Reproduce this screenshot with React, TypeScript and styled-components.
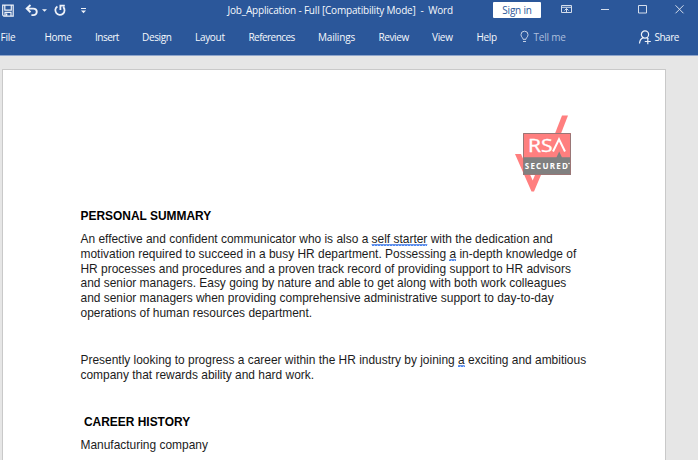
import React from 'react';
import styled, { createGlobalStyle } from 'styled-components';

const GlobalStyle = createGlobalStyle`
  * { box-sizing: border-box; }
  body { margin: 0; overflow: hidden; background: #e6e6e6; }
`;

const Window = styled.div`
  display: flex;
  flex-direction: column;
  width: 698px;
  height: 460px;
  overflow: hidden;
  background: #e6e6e6;
`;

const Chrome = styled.header`
  height: 56px;
  flex: none;
  background: #2b579a;
  border-bottom: 1px solid #8fa5cb;
  color: #f6f9fd;
  font: 10px/14px 'Open Sans', 'Noto Sans', sans-serif;
`;

const TitleBar = styled.div`
  display: flex;
  height: 21px;
`;

const QuickAccess = styled.div`
  width: 227.5px;
  flex: none;
`;

const Title = styled.div`
  width: 265.5px;
  padding-top: 3px;
  flex: none;
  white-space: pre;
  letter-spacing: -0.19px;
`;

const SignIn = styled.button`
  width: 48px;
  height: 16px;
  margin-top: 2px;
  padding: 0;
  flex: none;
  border: 0;
  border-radius: 1px;
  background: #fff;
  color: #2b579a;
  font: 10px/15px 'Open Sans', 'Noto Sans', sans-serif;
  letter-spacing: -0.2px;
`;

const WindowControls = styled.div`
  width: 157px;
  flex: none;
`;

const Tabs = styled.nav`
  display: flex;
  height: 34px;
  padding: 9px 0 0 0.5px;
`;

const Tab = styled.span<{ $width: number; $tracking: number; $after?: number; $muted?: boolean }>`
  flex: none;
  width: ${(p) => p.$width}px;
  margin-right: ${(p) => p.$after ?? 23.5}px;
  letter-spacing: ${(p) => p.$tracking}px;
  white-space: nowrap;
  color: ${(p) => (p.$muted ? '#adbfdd' : '#f6f9fd')};
`;

const TabIcon = styled.svg`
  flex: none;
  display: block;
`;

const Page = styled.main`
  width: 664px;
  flex: 1;
  margin: 13px 0 0 2px;
  padding: 45px 0 0 77.5px;
  border: solid #c9c9c9;
  border-width: 1px 1px 0 1px;
  background: #fff;
  color: #1c1c1c;
  font: 11.95px/14.75px 'Liberation Sans', Arial, sans-serif;
`;

const Logo = styled.svg`
  display: block;
  margin: 0 0 0 434.5px;
`;

const Heading = styled.h2<{ $top: number; $indent?: number }>`
  margin: ${(p) => p.$top}px 0 0 ${(p) => p.$indent ?? 0}px;
  font-size: inherit;
  line-height: 15px;
  color: #000;
`;

const Paragraph = styled.p<{ $top: number }>`
  margin: ${(p) => p.$top}px 0 0;
  white-space: nowrap;
`;

const Grammar = styled.span`
  background: repeating-linear-gradient(90deg, #4a86f2 0 2px, #a9c6fa 2px 3px) 0 100% / 100% 1px no-repeat;
  text-decoration: underline;
  text-decoration-color: #6a94e6;
  text-decoration-thickness: 1px;
  text-decoration-skip-ink: none;
  text-underline-offset: 1px;
`;

const tabs: [string, number, number, number?][] = [
  ['File', 15, -0.2, 29],
  ['Home', 27, -0.3],
  ['Insert', 23.7, -0.52, 23.3],
  ['Design', 29.5, -0.36],
  ['Layout', 29.7, -0.3, 23.8],
  ['References', 46, -0.55],
  ['Mailings', 37, -0.18],
  ['Review', 30, -0.4],
  ['View', 20.5, -0.3, 24],
  ['Help', 20.5, -0.3, 22],
];

export default function App() {
  return (
    <>
      <GlobalStyle />
      <Window>
        <Chrome>
          <TitleBar>
            <QuickAccess>
              <svg width="100" height="21" fill="none" stroke="#eef2f9">
                <path d="M2.7 5.2h10.5v10.9H3.8l-1.1-1z M4.8 5.5v4.6h6.5V5.5 M5 16v-3.6h6V16" strokeWidth="1.2" />
                <path d="M6.6 13.5v2.3" strokeWidth="1.4" />
                <path d="M27 8.6h6.2c4.6 0 4.9 6.5 0 6.5h-1.8 M30.5 5l-3.8 3.6 3.8 3.6" strokeWidth="1.9" />
                <path d="M42 9.2h5l-2.5 2.6z" fill="#eef2f9" stroke="none" />
                <path d="M57.4 6.4A4.6 4.6 0 1 0 63.2 7 M60.4 10V5.7h4.4" strokeWidth="1.8" />
                <path d="M81 8.5h5" />
                <path d="M81 10.5h5l-2.5 2.7z" fill="#eef2f9" stroke="none" />
              </svg>
            </QuickAccess>
            <Title>{'Job_Application - Full [Compatibility Mode]  -  Word'}</Title>
            <SignIn>Sign in</SignIn>
            <WindowControls>
              <svg width="157" height="21" fill="none" stroke="#d5deec">
                <path d="M20.5 5.5h10v7h-10z M20.5 7.3h10 M25.5 12V8.5 M23.5 10.5l2-2 2 2" />
                <path d="M60 9.5h8" />
                <path d="M97.5 5.5h8v7.5h-8z" />
                <path d="M134.5 5.3l8 8 M142.5 5.3l-8 8" />
              </svg>
            </WindowControls>
          </TitleBar>
          <Tabs>
            {tabs.map(([name, width, tracking, after]) => (
              <Tab key={name} $width={width} $tracking={tracking} $after={after}>{name}</Tab>
            ))}
            <TabIcon width="14.5" height="15" fill="none" stroke="#c6d2e6" strokeWidth="1">
              <path d="M4 9.3c0-1.8-2-2.2-2-4.6a3.5 3.5 0 0 1 7 0c0 2.4-2 2.8-2 4.6z M4 11.5h3" />
            </TabIcon>
            <Tab $width={32} $tracking={-0.2} $after={73} $muted>Tell me</Tab>
            <TabIcon width="16" height="15" fill="none" stroke="#eef2f9" strokeWidth="1.2">
              <circle cx="7" cy="4.5" r="3.6" />
              <path d="M1.5 13.5c.2-3 1.5-5 3.8-5.9 M8.8 7.5l1.6 1.5 M6.8 11.5h6 M9.8 8.7v5.6" />
            </TabIcon>
            <Tab $width={25} $tracking={-0.5} $after={0}>Share</Tab>
          </Tabs>
        </Chrome>
        <Page>
          <Logo width="60" height="77" viewBox="515 115 60 77">
            <path d="M562 115.5h6l-7 18h-6z" fill="#ff7f7f" />
            <path d="M515 154h6l11.7 26.5 2.3-5.5h6l-7 16.5h-2.5z" fill="#ff7f7f" />
            <path d="M523 133h48v25h-48z" fill="#ff7f7f" />
            <path d="M523 157.2h33.5l2.7-5.7 2.7 5.7h9.1v17.8h-48z" fill="#808080" />
            <path d="M523.5 133.5h47v41h-47z" fill="none" stroke="#9a7676" />
            <text x="528" y="151.5" fill="#fff" stroke="#fff" strokeWidth=".35" fontFamily="Open Sans" fontSize="17.5" textLength="24.5" lengthAdjust="spacingAndGlyphs">RS</text>
            <path d="M553 151.5l6-12.3 6 12.3" fill="none" stroke="#fff" strokeWidth="2" />
            <text x="524.8" y="169" fill="#fff" fontFamily="Open Sans" fontWeight="700" fontSize="8" textLength="43" lengthAdjust="spacing">SECURED</text>
            <circle cx="569" cy="163.5" r=".8" fill="#fff" />
          </Logo>
          <Heading $top={17}>PERSONAL SUMMARY</Heading>
          <Paragraph $top={8}>
            An effective and confident communicator who is also a <Grammar>self starter</Grammar> with the dedication and<br />
            motivation required to succeed in a busy HR department. Possessing <Grammar>a</Grammar> in-depth knowledge of<br />
            HR processes and procedures and a proven track record of providing support to HR advisors<br />
            and senior managers. Easy going by nature and able to get along with both work colleagues<br />
            and senior managers when providing comprehensive administrative support to day-to-day<br />
            operations of human resources department.
          </Paragraph>
          <Paragraph $top={32.5}>
            Presently looking to progress a career within the HR industry by joining <Grammar>a</Grammar> exciting and ambitious<br />
            company that rewards ability and hard work.
          </Paragraph>
          <Heading $top={32} $indent={3.5}>CAREER HISTORY</Heading>
          <Paragraph $top={8}>Manufacturing company</Paragraph>
        </Page>
      </Window>
    </>
  );
}
